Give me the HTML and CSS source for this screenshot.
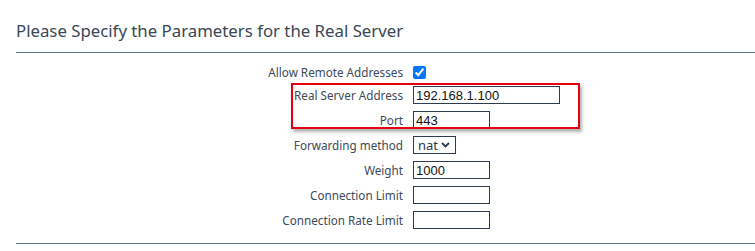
FILE: index.html
```html
<!DOCTYPE html>
<html>
<head>
<meta charset="utf-8">
<link rel="stylesheet" href="styles.css">
</head>
<body>
<div class="panel">
  <h2 class="title">Please Specify the Parameters for the Real Server</h2>
  <div class="form">
    <label class="lbl">Allow Remote Addresses</label>
    <div class="ctl"><input type="checkbox" class="chk" checked></div>
    <label class="lbl">Real Server Address</label>
    <div class="ctl"><input type="text" class="inp wide" value="192.168.1.100"></div>
    <label class="lbl">Port</label>
    <div class="ctl"><input type="text" class="inp" value="443"></div>
    <label class="lbl">Forwarding method</label>
    <div class="ctl"><div class="select"><span>nat</span><svg width="9" height="6" viewBox="0 0 9 6"><path d="M1 1 L4.5 4.5 L8 1" fill="none" stroke="#2b3a4a" stroke-width="1.8"/></svg></div></div>
    <label class="lbl">Weight</label>
    <div class="ctl"><input type="text" class="inp" value="1000"></div>
    <label class="lbl">Connection Limit</label>
    <div class="ctl"><input type="text" class="inp" value=""></div>
    <label class="lbl">Connection Rate Limit</label>
    <div class="ctl"><input type="text" class="inp" value=""></div>
  </div>
  <div class="highlight"></div>
</div>
</body>
</html>
```
FILE: styles.css
```css
html, body {
  margin: 0;
  padding: 0;
  background: #ffffff;
}
.panel {
  position: relative;
  padding: 0 0 0 16px;
  font-family: "Noto Sans", "Open Sans", sans-serif;
}
.title {
  margin: 0;
  padding-top: 21px;
  height: 31px;
  font-size: 16.8px;
  font-weight: normal;
  line-height: 20px;
  color: #3a4756;
  border-bottom: 1px solid #5a7a93;
}
.form {
  display: grid;
  grid-template-columns: 387px auto;
  column-gap: 10px;
  row-gap: 7px;
  padding-top: 13px;
  padding-bottom: 14px;
  border-bottom: 1px solid #5a7a93;
}
.lbl {
  text-align: right;
  font-size: 11.7px;
  color: #3c4a5b;
  line-height: 18px;
  white-space: nowrap;
}
.form .lbl:first-child {
  line-height: 13px;
}
.ctl {
  display: flex;
  align-items: center;
  height: 18px;
}
.form .ctl:nth-child(2) {
  height: 13px;
}
.chk {
  margin: 0;
  width: 13px;
  height: 13px;
}
.inp {
  box-sizing: border-box;
  width: 77px;
  height: 18px;
  margin: 0;
  padding: 0 2px;
  border: 1px solid #2e3d4d;
  border-radius: 0;
  font-family: "Liberation Sans", Arial, sans-serif;
  font-size: 13px;
  color: #111111;
  outline: none;
}
.inp.wide {
  width: 147px;
}
.select {
  box-sizing: border-box;
  width: 43px;
  height: 18px;
  border: 1px solid #2e3d4d;
  display: flex;
  align-items: center;
  justify-content: space-between;
  padding: 0 5px 0 4px;
  font-size: 13px;
  color: #2b3a4a;
  line-height: 16px;
}
.highlight {
  position: absolute;
  left: 291px;
  top: 83px;
  width: 289px;
  height: 46px;
  box-sizing: border-box;
  border: 2px solid #e3000f;
  box-shadow: 2px 3px 3px rgba(0, 0, 0, 0.3);
}
```
